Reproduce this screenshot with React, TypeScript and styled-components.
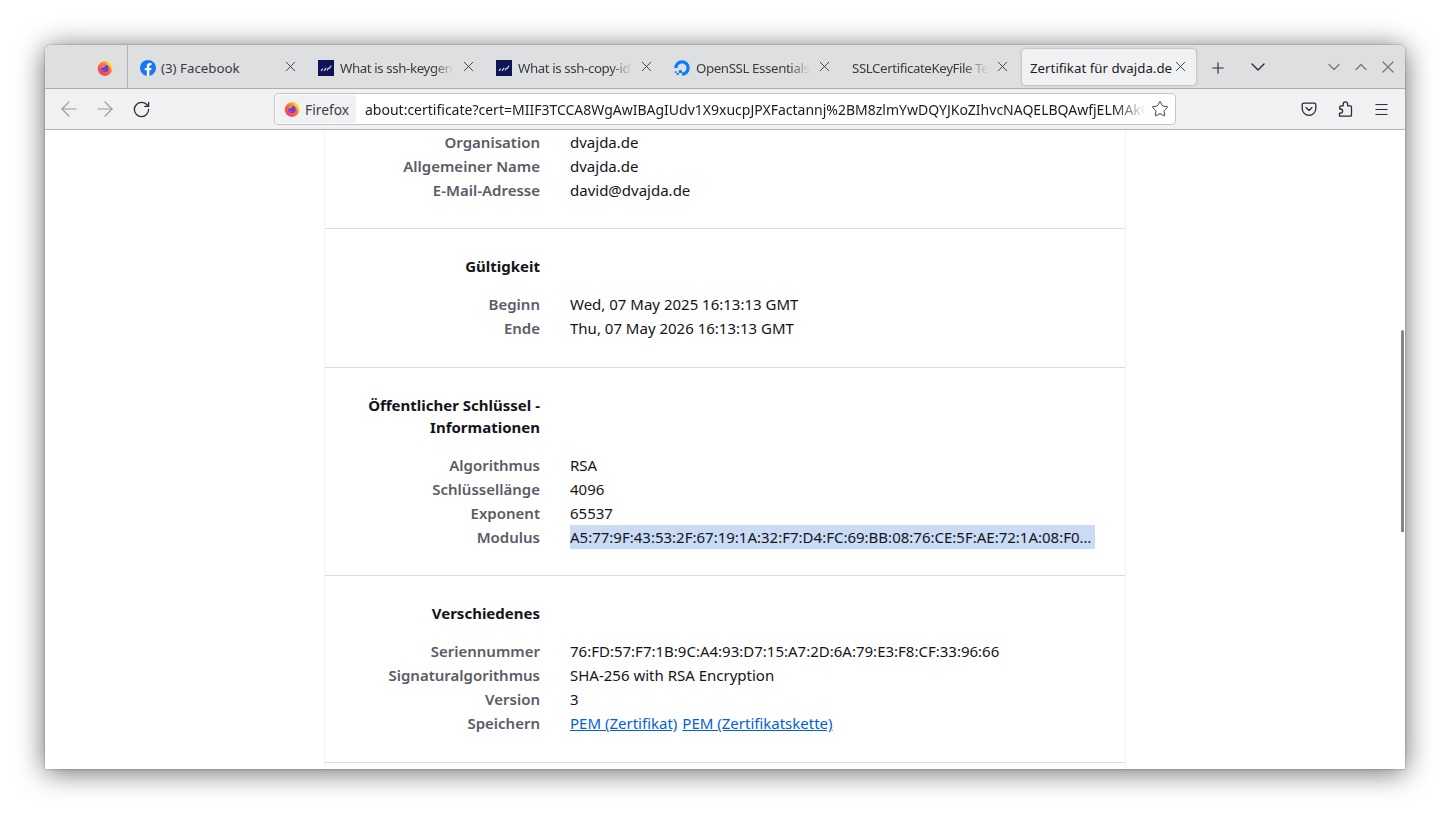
import React from "react";
import styled, { createGlobalStyle } from "styled-components";
import { ArrowLeft, ArrowRight, RotateCw, Star, Plus, ChevronDown, ChevronUp, X, Menu } from "lucide-react";

const GlobalStyle = createGlobalStyle`
  html, body {
    margin: 0;
    padding: 0;
    background: #ffffff;
    font-family: "Noto Sans", "Open Sans", sans-serif;
    overflow: hidden;
  }
`;

const Desktop = styled.div`
  width: 1450px;
  height: 814px;
  padding: 45px;
  box-sizing: border-box;
  overflow: hidden;
`;

const Window = styled.div`
  width: 1360px;
  height: 724px;
  display: flex;
  flex-direction: column;
  overflow: hidden;
  border-radius: 6px 6px 0 0;
  background: #fff;
  box-shadow: 0 0 2px rgba(0, 0, 0, 0.4), 0 3px 28px rgba(0, 0, 0, 0.6);
`;

const TabBar = styled.div`
  height: 44px;
  flex: none;
  box-sizing: border-box;
  display: flex;
  align-items: center;
  background: #dedfe1;
  border-bottom: 1px solid #adadae;
`;

const PinnedTab = styled.div`
  width: 83px;
  height: 43px;
  flex: none;
  box-sizing: border-box;
  display: flex;
  align-items: center;
  justify-content: flex-end;
  padding: 2px 14px 0 0;
  border-right: 1px solid #b0b0b2;
`;

const Tab = styled.div<{ $width: number }>`
  width: ${(p) => p.$width}px;
  flex: none;
  height: 36px;
  box-sizing: border-box;
  display: flex;
  align-items: center;
  gap: 5px;
  padding: 2px 7px 0 12px;
  font-size: 13.3px;
  color: #3b3b3f;
`;

const ActiveTab = styled(Tab)`
  background: #f0f1f3;
  border-radius: 4px;
  box-shadow: 0 0 3px rgba(0, 0, 0, 0.3);
  margin-left: 4px;
  padding-left: 8px;
  gap: 0;
  color: #1c1b22;
`;

const TabTitle = styled.span<{ $fade?: boolean }>`
  flex: 1;
  min-width: 0;
  white-space: nowrap;
  ${(p) =>
    p.$fade &&
    `overflow: hidden;
     letter-spacing: -0.4px;
     -webkit-mask-image: linear-gradient(to right, #000 82%, transparent 100%);
     mask-image: linear-gradient(to right, #000 82%, transparent 100%);`}

  svg + & {
    margin-left: ${(p) => (p.$fade ? 1 : 0)}px;
  }
`;

const TabClose = styled.span`
  width: 18px;
  flex: none;
  display: flex;
  justify-content: center;
  margin-bottom: 2px;
  color: #3b3b3f;
`;

const TabBarButton = styled.span<{ $width: number; $nudge?: number }>`
  width: ${(p) => p.$width}px;
  flex: none;
  display: flex;
  justify-content: center;
  margin-top: ${(p) => p.$nudge ?? 0}px;
  color: #2b2a33;
`;

const NewTabButton = styled(TabBarButton)`
  margin-left: 2px;
`;

const WindowButtons = styled.div`
  margin-left: auto;
  display: flex;
  gap: 7px;
  padding-right: 7px;
  color: #77777a;
`;

const Toolbar = styled.div`
  height: 41px;
  flex: none;
  box-sizing: border-box;
  display: flex;
  align-items: center;
  background: #f0f1f3;
  border-bottom: 1px solid #b4b4b6;
`;

const NavButton = styled.span<{ $off?: boolean }>`
  width: 36px;
  flex: none;
  display: flex;
  align-items: center;
  justify-content: center;
  color: ${(p) => (p.$off ? "#9c9ca0" : "#2b2a33")};
`;

const NavGroup = styled.div`
  display: flex;
  padding-left: 6px;
  width: 229px;
  flex: none;
  box-sizing: border-box;
`;

const UrlBar = styled.div`
  width: 902px;
  height: 32px;
  flex: none;
  box-sizing: border-box;
  display: flex;
  align-items: center;
  background: #fff;
  border: 1px solid #c4c4c6;
  border-radius: 4px;
  padding: 1px;
`;

const Identity = styled.div`
  height: 28px;
  width: 80px;
  box-sizing: border-box;
  flex: none;
  display: flex;
  align-items: center;
  gap: 5px;
  padding: 0 0 0 8px;
  background: #f0f1f3;
  border-radius: 3px;
  font-size: 13.8px;
  color: #3f3f44;
`;

const UrlText = styled.div`
  flex: 1;
  min-width: 0;
  margin-left: 9px;
  white-space: nowrap;
  overflow: hidden;
  font-size: 14px;
  color: #1c1b22;
  -webkit-mask-image: linear-gradient(to right, #000 96%, transparent 100%);
  mask-image: linear-gradient(to right, #000 96%, transparent 100%);
`;

const StarSlot = styled.span`
  width: 28px;
  flex: none;
  display: flex;
  justify-content: center;
  color: #2b2a33;
`;

const ToolIcons = styled.div`
  display: flex;
  margin-left: 115px;
  color: #2b2a33;
`;

const ToolIcon = styled.span`
  width: 36px;
  display: flex;
  justify-content: center;
`;

const Viewport = styled.div`
  flex: 1;
  min-height: 0;
  position: relative;
  overflow: hidden;
  background: #fff;
`;

const Thumb = styled.div`
  position: absolute;
  right: 1px;
  top: 200px;
  width: 3px;
  height: 202px;
  border-radius: 2px 2px 0 0;
  background: #86868a;
`;

const Card = styled.div`
  width: 802px;
  box-sizing: border-box;
  margin-left: 279px;
  padding-top: 0.4px;
  border-left: 1px solid #f3f3f4;
  border-right: 1px solid #f3f3f4;
  background: #fff;
`;

const Section = styled.section`
  padding: 26px 0 26.6px;
  border-bottom: 1px solid #dcdcde;

  &:first-child {
    padding: 0 0 25.6px;
  }
`;

const Heading = styled.h3`
  width: 215px;
  margin: 0 0 15px;
  font-size: 15px;
  line-height: 22px;
  font-weight: 700;
  text-align: right;
  color: #15141a;
`;

const Row = styled.div`
  display: grid;
  grid-template-columns: 215px 525px;
  column-gap: 30px;
  height: 24px;
  line-height: 24px;
  font-size: 15px;
`;

const Label = styled.span`
  font-weight: 600;
  text-align: right;
  color: #5b5b66;
`;

const Value = styled.span<{ $selected?: boolean }>`
  color: #15141a;
  white-space: nowrap;
  overflow: hidden;
  text-overflow: ellipsis;
  background: ${(p) => (p.$selected ? "#c9dbf5" : "transparent")};
`;

const Link = styled.a`
  color: #0060df;
  text-decoration: underline;
  margin-right: 5px;
`;

const FirefoxLogo = ({ id }: { id: string }) => (
  <svg width="16" height="16" viewBox="0 0 16 16">
    <defs>
      <linearGradient id={id} x1="0.85" y1="0.1" x2="0.2" y2="0.95">
        <stop offset="0" stopColor="#ffb52e" />
        <stop offset="0.5" stopColor="#ff6a2e" />
        <stop offset="1" stopColor="#f0357e" />
      </linearGradient>
    </defs>
    <circle cx="8" cy="8.6" r="7.3" fill={`url(#${id})`} />
    <path d="M10 .6c2.800 1.200 5.300 3.600 5.300 7.600 0 1-.2 1.900-.6 2.700-.3-3.200-1.700-5.200-3.900-6.600C9.900 3.700 9.600 2 10 .6z" fill="#ffdf3c" />
    <circle cx="8" cy="8.400" r="3.700" fill="#6f3be0" />
    <path d="M3.800 7.800C4.600 5.600 7.400 4.400 9.800 5.600 8.400 5.600 7.500 6.200 7.300 7c-1.300-.3-2.600 0-3.500.8z" fill="#ffb23a" />
    <path d="M5 9.700c1.200 1.300 3.200 1.500 4.500.6-.9 1.300-3.400 1.500-4.500-.6z" fill="#ff8a3a" />
  </svg>
);

const FacebookIcon = () => (
  <svg width="16" height="16" viewBox="0 0 16 16">
    <circle cx="8" cy="8" r="8" fill="#1877f2" />
    <path d="M11.100 10.300l.4-2.300H9.300V6.500c0-.6.3-1.200 1.300-1.200h1V3.300s-.9-.2-1.800-.2c-1.800 0-3 1.100-3 3.100V8h-2v2.300h2V16h2.500v-5.700h1.800z" fill="#fff" />
  </svg>
);

const ChartFavicon = () => (
  <svg width="16" height="16" viewBox="0 0 16 16">
    <rect width="16" height="16" fill="#0f1454" />
    <path d="M3 10.800l1.800-2.200M6 10.800l2.200-3M9 10.400l1.500-2.600M10.800 9L13.200 5.600" fill="none" stroke="#d6d9f5" strokeWidth="1.100" />
  </svg>
);

const OceanFavicon = () => (
  <svg width="16" height="16" viewBox="0 0 16 16">
    <path d="M8 15.800v-3.300a4.500 4.500 0 1 0-4.500-4.500H.200A7.800 7.800 0 1 1 8 15.800z" fill="#0a7cff" />
    <rect x="4.800" y="10.200" width="3.200" height="2.800" fill="#0a7cff" />
    <rect x="2.600" y="13" width="2.200" height="2" fill="#0a7cff" />
    <rect x=".8" y="11.200" width="1.800" height="1.800" fill="#0a7cff" />
  </svg>
);

const PocketIcon = () => (
  <svg width="16" height="16" viewBox="0 0 16 16" fill="none" stroke="currentColor" strokeWidth="1.300">
    <path d="M2.600 2.200h10.800c.8 0 1.400.6 1.400 1.400v4a6.800 6.800 0 0 1-13.600 0v-4c0-.8.6-1.400 1.400-1.400z" />
    <path d="M5 6.600l3 2.800 3-2.800" strokeLinecap="round" strokeLinejoin="round" />
  </svg>
);

const ExtensionsIcon = () => (
  <svg width="16" height="16" viewBox="0 0 16 16" fill="none" stroke="currentColor" strokeWidth="1.300" strokeLinejoin="round">
    <path d="M2.500 15.200h10.800c.7 0 1.200-.5 1.200-1.200V6c0-.7-.5-1.200-1.200-1.200h-2.700V3a2.200 2.200 0 0 0-4.400 0v1.800H3.900c-.7 0-1.200.5-1.200 1.200v2h.8a2.100 2.100 0 0 1 0 4.200h-1z" />
  </svg>
);

const tabClose = (
  <TabClose>
    <X size={17} strokeWidth={1.3} />
  </TabClose>
);

const App = () => {
  return (
    <Desktop>
      <GlobalStyle />
      <Window>
        <TabBar>
          <PinnedTab>
            <FirefoxLogo id="ffPinned" />
          </PinnedTab>
          <Tab $width={178}>
            <FacebookIcon />
            <TabTitle>(3) Facebook</TabTitle>
            {tabClose}
          </Tab>
          <Tab $width={178}>
            <ChartFavicon />
            <TabTitle $fade>What is ssh-keygen</TabTitle>
            {tabClose}
          </Tab>
          <Tab $width={178}>
            <ChartFavicon />
            <TabTitle $fade>What is ssh-copy-id</TabTitle>
            {tabClose}
          </Tab>
          <Tab $width={178}>
            <OceanFavicon />
            <TabTitle $fade>OpenSSL Essentials</TabTitle>
            {tabClose}
          </Tab>
          <Tab $width={178}>
            <TabTitle $fade>SSLCertificateKeyFile Tex</TabTitle>
            {tabClose}
          </Tab>
          <ActiveTab $width={174}>
            <TabTitle>Zertifikat für dvajda.de</TabTitle>
            {tabClose}
          </ActiveTab>
          <NewTabButton $width={40} $nudge={2}>
            <Plus size={18} strokeWidth={1.5} />
          </NewTabButton>
          <TabBarButton $width={40}>
            <ChevronDown size={24} strokeWidth={1.4} />
          </TabBarButton>
          <WindowButtons>
            <ChevronDown size={20} strokeWidth={1.5} />
            <ChevronUp size={20} strokeWidth={1.5} />
            <X size={20} strokeWidth={1.5} />
          </WindowButtons>
        </TabBar>
        <Toolbar>
          <NavGroup>
            <NavButton $off>
              <ArrowLeft size={24} strokeWidth={1.2} />
            </NavButton>
            <NavButton $off>
              <ArrowRight size={24} strokeWidth={1.2} />
            </NavButton>
            <NavButton>
              <RotateCw size={19} strokeWidth={1.6} />
            </NavButton>
          </NavGroup>
          <UrlBar>
            <Identity>
              <FirefoxLogo id="ffIdentity" />
              Firefox
            </Identity>
            <UrlText>about:certificate?cert=MIIF3TCCA8WgAwIBAgIUdv1X9xucpJPXFactannj%2BM8zlmYwDQYJKoZIhvcNAQELBQAwfjELMAkG</UrlText>
            <StarSlot>
              <Star size={18} strokeWidth={1.2} />
            </StarSlot>
          </UrlBar>
          <ToolIcons>
            <ToolIcon>
              <PocketIcon />
            </ToolIcon>
            <ToolIcon>
              <ExtensionsIcon />
            </ToolIcon>
            <ToolIcon>
              <Menu size={17} strokeWidth={1.4} />
            </ToolIcon>
          </ToolIcons>
        </Toolbar>
        <Viewport>
          <Card>
            <Section>
              <Row>
                <Label>Organisation</Label>
                <Value>dvajda.de</Value>
              </Row>
              <Row>
                <Label>Allgemeiner Name</Label>
                <Value>dvajda.de</Value>
              </Row>
              <Row>
                <Label>E-Mail-Adresse</Label>
                <Value>david@dvajda.de</Value>
              </Row>
            </Section>
            <Section>
              <Heading>Gültigkeit</Heading>
              <Row>
                <Label>Beginn</Label>
                <Value>Wed, 07 May 2025 16:13:13 GMT</Value>
              </Row>
              <Row>
                <Label>Ende</Label>
                <Value>Thu, 07 May 2026 16:13:13 GMT</Value>
              </Row>
            </Section>
            <Section>
              <Heading>Öffentlicher Schlüssel - Informationen</Heading>
              <Row>
                <Label>Algorithmus</Label>
                <Value>RSA</Value>
              </Row>
              <Row>
                <Label>Schlüssellänge</Label>
                <Value>4096</Value>
              </Row>
              <Row>
                <Label>Exponent</Label>
                <Value>65537</Value>
              </Row>
              <Row>
                <Label>Modulus</Label>
                <Value $selected>A5:77:9F:43:53:2F:67:19:1A:32:F7:D4:FC:69:BB:08:76:CE:5F:AE:72:1A:08:F0:3C:91:7E:22:5D:AA</Value>
              </Row>
            </Section>
            <Section>
              <Heading>Verschiedenes</Heading>
              <Row>
                <Label>Seriennummer</Label>
                <Value>76:FD:57:F7:1B:9C:A4:93:D7:15:A7:2D:6A:79:E3:F8:CF:33:96:66</Value>
              </Row>
              <Row>
                <Label>Signaturalgorithmus</Label>
                <Value>SHA-256 with RSA Encryption</Value>
              </Row>
              <Row>
                <Label>Version</Label>
                <Value>3</Value>
              </Row>
              <Row>
                <Label>Speichern</Label>
                <Value>
                  <Link href="#">PEM (Zertifikat)</Link>
                  <Link href="#">PEM (Zertifikatskette)</Link>
                </Value>
              </Row>
            </Section>
            <Section />
          </Card>
          <Thumb />
        </Viewport>
      </Window>
    </Desktop>
  );
};

export default App;
